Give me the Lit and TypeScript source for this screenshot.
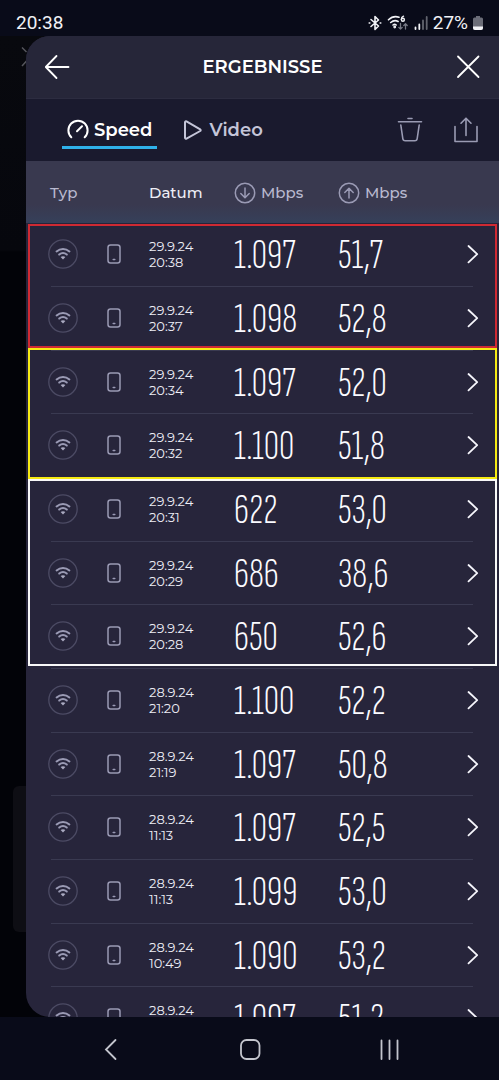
import { LitElement, html, css, svg } from "lit";
import { customElement } from "lit/decorators.js";

interface Result {
  date: string;
  time: string;
  down: string;
  up: string;
}

const RESULTS: Result[] = [
  ["29.9.24", "20:38", "1.097", "51,7"],
  ["29.9.24", "20:37", "1.098", "52,8"],
  ["29.9.24", "20:34", "1.097", "52,0"],
  ["29.9.24", "20:32", "1.100", "51,8"],
  ["29.9.24", "20:31", "622", "53,0"],
  ["29.9.24", "20:29", "686", "38,6"],
  ["29.9.24", "20:28", "650", "52,6"],
  ["28.9.24", "21:20", "1.100", "52,2"],
  ["28.9.24", "21:19", "1.097", "50,8"],
  ["28.9.24", "11:13", "1.097", "52,5"],
  ["28.9.24", "11:13", "1.099", "53,0"],
  ["28.9.24", "10:49", "1.090", "53,2"],
  ["28.9.24", "\u00a0", "1.097", "51,2"],
].map(([date, time, down, up]) => ({ date, time, down, up }));

const arrowCircle = (up: boolean) => html`<svg width="22" height="22" viewBox="0 0 22 22" stroke-width="1.5" aria-hidden="true">
  <circle cx="11" cy="11" r="9.7" />
  ${up ? svg`<path d="M11 16V6.5M6.8 10.5 11 6.3l4.2 4.2" />` : svg`<path d="M11 6v9.5M6.8 11.500 11 15.700l4.200-4.200" />`}
</svg>`;

@customElement("status-bar")
export class StatusBar extends LitElement {
  static styles = css`
    :host {
      display: flex;
      align-items: center;
      justify-content: space-between;
      box-sizing: border-box;
      height: 36px;
      padding: 10px 16px 0 16px;
      color: #f1f2f6;
      background: #090b19;
      font: 400 19px/24px Roboto, "Noto Sans", sans-serif;
    }
    .right {
      display: flex;
      align-items: center;
      gap: 5px;
    }
    svg {
      display: block;
      fill: none;
      stroke: #f1f2f6;
      stroke-linecap: round;
      stroke-linejoin: round;
    }
  `;
  render() {
    return html`
      <span>20:38</span>
      <div class="right">
        <svg width="14" height="16" viewBox="0 0 14 16" stroke-width="1.6" aria-hidden="true">
          <path d="M3 4.500 10.500 11 7 14.500V1.500L10.500 5 3 11.500M1.200 8h.6M12.200 8h.6" />
        </svg>
        <svg width="22" height="16" viewBox="0 0 22 16" stroke-width="1.6" aria-hidden="true">
          <path d="M1.500 4.800C4.500 1.800 8.500 1 12 2.200M3.700 7.500c2.300-2 5.200-2.300 7.400-1M6 10c1-.8 2.200-.8 3.200 0" />
          <circle cx="7.700" cy="12" r=".6" fill="#f1f2f6" />
          <path stroke-width="1.400" d="M16.500 1.200c-1.500.7-2.200 1.800-2.200 3.300" />
          <circle cx="15.900" cy="4.700" r="1.500" stroke-width="1.400" />
          <path stroke="#777a86" stroke-width="1.300" d="M13.500 8.500v5.500M11.800 12.400l1.700 1.700 1.700-1.700M18.500 14V8.800M16.800 10.500l1.700-1.700 1.700 1.700" />
        </svg>
        <svg width="14" height="16" viewBox="0 0 14 16" stroke-width="1.800" aria-hidden="true">
          <path d="M1.500 12.500V14M5.300 9.500V14" />
          <path stroke="#62646f" d="M9 5.500V14M12.700 2v12" />
        </svg>
        <span>27%</span>
        <svg width="10" height="16" viewBox="0 0 10 16" aria-hidden="true">
          <path stroke="none" fill="#6b6d78" d="M3 1h4v1.500h1.500A1.500 1.500 0 0 1 10 4v9a2 2 0 0 1-2 2H2a2 2 0 0 1-2-2V4a1.500 1.500 0 0 1 1.500-1.500H3z" />
          <path stroke="none" fill="#f1f2f6" d="M0 11.500h10V13a2 2 0 0 1-2 2H2a2 2 0 0 1-2-2z" />
        </svg>
      </div>
    `;
  }
}

@customElement("nav-bar")
export class NavBar extends LitElement {
  static styles = css`
    :host {
      display: grid;
      grid-template-columns: repeat(3, 28%);
      justify-content: center;
      align-items: center;
      height: 63px;
      background: #090b19;
    }
    button {
      display: grid;
      place-items: center;
      height: 48px;
      margin: 0;
      padding: 0;
      border: 0;
      background: none;
    }
    svg {
      fill: none;
      stroke: #c3c5cd;
      stroke-width: 1.800;
      stroke-linecap: round;
    }
  `;
  render() {
    return html`
      <button aria-label="Zurück"><svg width="24" height="24" viewBox="0 0 24 24"><path d="M17.500 3 8 12.500l9.500 9.500" /></svg></button>
      <button aria-label="Startseite"><svg width="24" height="24" viewBox="0 0 24 24"><rect x="3" y="3" width="18.500" height="19" rx="5.500" /></svg></button>
      <button aria-label="Letzte Apps"><svg width="24" height="24" viewBox="0 0 24 24"><path d="M4.500 3.500v18.500M12.500 3.500v18.500M20.500 3.500v18.500" /></svg></button>
    `;
  }
}

@customElement("result-table")
export class ResultTable extends LitElement {
  static styles = css`
    :host {
      display: block;
      position: relative;
      color: #eeeef6;
    }
    table,
    thead,
    tbody {
      display: block;
    }
    tr {
      position: relative;
      display: grid;
      grid-template-columns: 59fr 42fr 85fr 104fr 90fr 51fr;
      align-items: center;
      box-sizing: border-box;
      height: 64px;
      padding: 0 20px 2px 22px;
    }
    tbody tr:nth-child(3n) {
      height: 63px;
    }
    tbody tr::after {
      content: "";
      position: absolute;
      left: 25px;
      right: 26px;
      bottom: 0;
      height: 1px;
      background: #3a3a51;
    }
    thead tr {
      height: 62px;
      padding-top: 4px;
      background: linear-gradient(#39394f 70%, #36405a);
    }
    th,
    td {
      padding: 0;
      text-align: left;
      font-weight: 400;
    }
    th {
      font-size: 15px;
      line-height: 24px;
      font-weight: 500;
      color: #b9bad0;
    }
    .typ {
      grid-column: span 2;
      padding-left: 2px;
    }
    .sorted {
      color: #eeeef6;
    }
    .unit {
      display: flex;
      align-items: center;
      gap: 5px;
    }
    svg {
      display: block;
      fill: none;
      stroke: #9a9ab4;
      stroke-linecap: round;
      stroke-linejoin: round;
    }
    .stamp {
      font-size: 13px;
      line-height: 16px;
    }
    .stamp span {
      display: block;
    }
    .value {
      padding-top: 2px;
      font: 300 43px/48px "Sofia Sans Extra Condensed", "Barlow Condensed", "Liberation Sans", sans-serif;
      color: #fbfbff;
    }
    button {
      display: block;
      margin: 0 0 0 auto;
      padding: 0;
      border: 0;
      background: none;
    }
    button svg {
      stroke: #f6f6fc;
    }
    .mark {
      position: absolute;
      left: 2px;
      right: 2px;
      box-sizing: border-box;
      border: 2px solid;
      pointer-events: none;
    }
    .red {
      top: 63px;
      height: 124px;
      border-color: #cf2a33;
    }
    .yellow {
      top: 187px;
      height: 131px;
      border-color: #f5ea14;
    }
    .white {
      top: 318px;
      height: 187px;
      border-color: #f8f8f8;
    }
  `;
  render() {
    return html`
      <table>
        <thead>
          <tr>
            <th class="typ">Typ</th>
            <th class="sorted">Datum</th>
            <th><span class="unit">${arrowCircle(false)}Mbps</span></th>
            <th><span class="unit">${arrowCircle(true)}Mbps</span></th>
          </tr>
        </thead>
        <tbody>
          ${RESULTS.map(
            (r) => html`<tr>
              <td>
                <svg width="30" height="30" viewBox="0 0 30 30" role="img" aria-label="WLAN">
                  <circle cx="15" cy="15" r="14.200" stroke="#4c4b64" stroke-width="1.300" />
                  <path stroke-width="2" d="M8.600 12.400c3.800-3.300 9-3.300 12.800 0M11.200 15.600c2.300-1.900 5.300-1.900 7.600 0" />
                  <path stroke="none" fill="#a9a9c0" d="M12.600 18.100c1.500-1.100 3.300-1.100 4.800 0L15 20.500z" />
                </svg>
              </td>
              <td>
                <svg width="14" height="20" viewBox="0 0 14 20" stroke-width="1.500" role="img" aria-label="Telefon">
                  <rect x="1" y="1" width="12" height="18" rx="2.500" />
                  <path d="M6.200 15.500h1.600" />
                </svg>
              </td>
              <td class="stamp"><span>${r.date}</span><span>${r.time}</span></td>
              <td class="value">${r.down}</td>
              <td class="value">${r.up}</td>
              <td>
                <button aria-label="Details">
                  <svg width="12" height="20" viewBox="0 0 12 20" stroke-width="1.800"><path d="M1.500 2 10.200 10.200 1.500 18.400" /></svg>
                </button>
              </td>
            </tr>`,
          )}
        </tbody>
      </table>
      <div class="mark red"></div>
      <div class="mark yellow"></div>
      <div class="mark white"></div>
    `;
  }
}

@customElement("app-root")
export class AppRoot extends LitElement {
  static styles = css`
    :host {
      display: grid;
      grid-template-rows: auto 1fr auto;
      height: 100vh;
      overflow: hidden;
      background: #090b19;
      font-family: Montserrat, "Open Sans", sans-serif;
    }
    main {
      position: relative;
      min-height: 0;
      padding-left: 26px;
      overflow: hidden;
      background: linear-gradient(#08090e, #06070d 214px, #020308 216px);
    }
    .behind-close {
      position: absolute;
      left: 20px;
      top: 10px;
      fill: none;
      stroke: #55565c;
      stroke-width: 1.500;
    }
    .behind-card {
      position: absolute;
      left: 13px;
      top: 750px;
      width: 40px;
      height: 146px;
      border-radius: 6px;
      background: #0e0e14;
    }
    .panel {
      position: relative;
      height: 100%;
      overflow: hidden;
      border-radius: 24px 0 0 24px;
      background: #27253b;
    }
    header {
      display: grid;
      grid-template-columns: 26px 1fr 26px;
      align-items: center;
      box-sizing: border-box;
      height: 63px;
      padding: 0 18px;
      border-bottom: 1px solid #2c2c40;
      background: #262639;
    }
    h1 {
      margin: 0;
      text-align: center;
      font-size: 18px;
      line-height: 24px;
      font-weight: 600;
      color: #fff;
    }
    button {
      display: flex;
      align-items: center;
      margin: 0;
      padding: 0;
      border: 0;
      background: none;
      font: 600 18px/24px Montserrat, "Open Sans", sans-serif;
      color: #c4c5d8;
    }
    button svg {
      display: block;
      fill: none;
      stroke: currentColor;
      stroke-linecap: round;
      stroke-linejoin: round;
    }
    header button {
      color: #fff;
    }
    nav {
      display: flex;
      align-items: center;
      box-sizing: border-box;
      height: 62px;
      padding: 0 20px 0 36px;
      background: #1a1a2e;
    }
    .tab {
      gap: 5px;
      padding: 6px 5px 4px 5px;
      border-bottom: 3px solid transparent;
    }
    .tab + .tab {
      margin-left: 20px;
    }
    .active {
      color: #fff;
      border-color: #2fb1ea;
    }
    .actions {
      display: flex;
      gap: 30px;
      margin-left: auto;
    }
    .actions button {
      color: #9a9bb3;
    }
  `;
  render() {
    return html`
      <status-bar></status-bar>
      <main>
        <svg class="behind-close" width="10" height="22" viewBox="0 0 10 22" aria-hidden="true"><path d="M2 1.500 6.500 6M2 20 6.500 15" /></svg>
        <div class="behind-card"></div>
        <div class="panel">
          <header>
            <button aria-label="Zurück">
              <svg width="26" height="26" viewBox="0 0 26 26" stroke-width="1.800"><path d="M24.500 13H2M12.500 2 1.800 13l10.700 11" /></svg>
            </button>
            <h1>ERGEBNISSE</h1>
            <button aria-label="Schließen">
              <svg width="26" height="26" viewBox="0 0 26 26" stroke-width="1.800"><path d="m3 2.500 20.500 20.500M23.500 2.500 3 23" /></svg>
            </button>
          </header>
          <nav>
            <button class="tab active">
              <svg width="22" height="22" viewBox="0 0 22 22" stroke-width="2"><path d="M4.300 18.200a9.600 9.600 0 1 1 13.400 0M10 12.200l5-5" /></svg>
              Speed
            </button>
            <button class="tab">
              <svg width="22" height="22" viewBox="0 0 22 22" stroke-width="2"><path d="M3 3.200v15.600a1 1 0 0 0 1.500.8L18.200 12a1 1 0 0 0 0-1.700L4.500 2.400A1 1 0 0 0 3 3.200z" /></svg>
              Video
            </button>
            <div class="actions">
              <button aria-label="Löschen">
                <svg width="26" height="26" viewBox="0 0 26 26" stroke-width="1.600"><path d="M1.500 4.800h23M11 1.500h4M3.800 8l2 13.500a2.500 2.500 0 0 0 2.500 2.300h9.400a2.500 2.500 0 0 0 2.500-2.300L22.200 8" /></svg>
              </button>
              <button aria-label="Teilen">
                <svg width="26" height="26" viewBox="0 0 26 26" stroke-width="1.600"><path d="M2 9.500v15h22v-15M13 18.500V1.500M8 6.200l5-5 5 5" /></svg>
              </button>
            </div>
          </nav>
          <result-table></result-table>
        </div>
      </main>
      <nav-bar></nav-bar>
    `;
  }
}
